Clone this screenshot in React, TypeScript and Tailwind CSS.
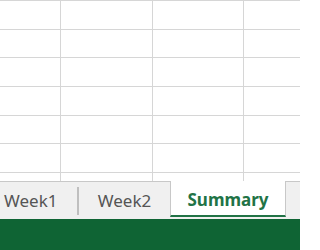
const rowHeights = ['h-[29px]', 'h-[28px]', 'h-[29px]', 'h-[29px]', 'h-[28px]', 'h-[29px]', 'h-[9px]'];

function GridRow({ height }: { height: string }) {
  return (
    <div className={`flex ${height} border-b border-[#d6d6d6]`}>
      <div className="w-[61px] shrink-0 border-r border-[#d6d6d6]" />
      <div className="w-[92px] shrink-0 border-r border-[#d6d6d6]" />
      <div className="w-[91px] shrink-0 border-r border-[#d6d6d6]" />
      <div className="flex-1" />
    </div>
  );
}

export default function App() {
  return (
    <div
      className="w-[300px] h-[250px] overflow-hidden bg-white flex flex-col"
      style={{ fontFamily: '"Noto Sans", "Open Sans", sans-serif' }}
    >
      {/* sheet grid */}
      <div className="border-t border-[#d6d6d6]">
        {rowHeights.map((h, i) => (
          <GridRow key={i} height={h} />
        ))}
      </div>

      {/* sheet tabs */}
      <div className="flex h-[38px] bg-[#f0f0f0] border-t border-[#c8c8c8] -mt-px">
        <div className="w-[77px] shrink-0 flex items-center pl-[4px] text-[17px] text-[#555555]">
          Week1
        </div>
        <div className="shrink-0 flex items-center">
          <div className="w-[2px] h-[28px] bg-[#bfbfbf]" />
        </div>
        <div className="w-[91px] shrink-0 flex items-center justify-center text-[17px] text-[#555555]">
          Week2
        </div>
        <div className="w-[116px] h-[36px] -mt-px pt-[3px] shrink-0 bg-white border-x border-[#c8c8c8] border-b-2 border-b-[#217346] flex items-center justify-center text-[17px] font-bold text-[#217346]">
          Summary
        </div>
        <div className="flex-1" />
      </div>

      {/* status bar */}
      <div className="flex-1 bg-[#0f6434]" />
    </div>
  );
}
